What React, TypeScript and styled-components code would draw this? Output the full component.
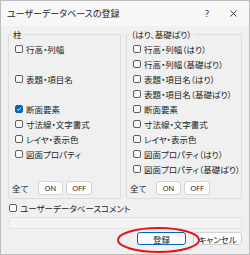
import React from 'react';
import styled, { createGlobalStyle } from 'styled-components';

const GlobalStyle = createGlobalStyle`
  body {
    margin: 0;
    font-family: "Noto Sans CJK JP", "Noto Sans", sans-serif;
    font-feature-settings: "palt";
    color: #1b1b1b;
  }
`;

const Window = styled.div`
  width: 250px;
  height: 255px;
  box-sizing: border-box;
  border: 1px solid #bdbdbd;
  background: #f0f0f0;
  display: flex;
  flex-direction: column;
`;

const TitleBar = styled.div`
  height: 25px;
  flex: none;
  display: flex;
  align-items: center;
  padding: 0 3px 0 6px;
  background: #f7f7f7;
  font-size: 9px;
`;

const Title = styled.div`
  flex: 1;
`;

const TitleButton = styled.div`
  width: 26px;
  height: 100%;
  display: flex;
  align-items: center;
  justify-content: center;
  font-family: "Noto Sans", sans-serif;
  font-size: 9px;
`;

const Body = styled.div`
  padding: 2px 7px 0 7px;
  display: flex;
  flex-direction: column;
`;

const Groups = styled.div`
  display: grid;
  grid-template-columns: 113px 1fr;
  gap: 5px;
`;

const Group = styled.fieldset`
  margin: 0;
  padding: 0 2px 3px 2px;
  border: 1px solid #dcdcdc;
  border-radius: 2px;
  min-width: 0;
`;

const Legend = styled.legend`
  padding: 0 2px;
  font-size: 8.5px;
  line-height: 12px;
`;

const List = styled.div`
  padding: 1px 0 0 4px;
  display: flex;
  flex-direction: column;
`;

const Row = styled.div`
  height: 15px;
  display: flex;
  align-items: center;
  gap: 3px;
  font-size: 8.5px;
  white-space: nowrap;
`;

const Box = styled.span<{ checked?: boolean }>`
  width: 8px;
  height: 8px;
  box-sizing: border-box;
  flex: none;
  border: 1px solid ${({ checked }) => (checked ? '#0067c0' : '#5c5c5c')};
  border-radius: 2px;
  background: ${({ checked }) => (checked ? '#0067c0' : '#fbfbfb')};
  display: flex;
  align-items: center;
  justify-content: center;
`;

const AllRow = styled.div`
  margin-top: 5px;
  padding-left: 1px;
  height: 14px;
  display: flex;
  align-items: center;
  gap: 3px;
`;

const AllLabel = styled.span`
  width: 23px;
  font-size: 8.5px;
`;

const SmallButton = styled.div<{ wide?: boolean }>`
  width: ${({ wide }) => (wide ? 26 : 25)}px;
  height: 14px;
  box-sizing: border-box;
  border: 1px solid #d3d3d3;
  border-radius: 3px;
  background: #fdfdfd;
  display: flex;
  align-items: center;
  justify-content: center;
  font-family: "Noto Sans", sans-serif;
  font-size: 7.5px;
`;

const CommentRow = styled(Row)`
  height: 12px;
  margin-top: 3px;
  padding-left: 1px;
`;

const TextField = styled.div`
  margin: 3px 0 0 1px;
  height: 12px;
  box-sizing: border-box;
  border: 1px solid #e2e2e2;
  border-radius: 2px;
  background: #f4f4f4;
`;

const Buttons = styled.div`
  margin-top: 3px;
  display: flex;
  justify-content: flex-end;
  gap: 7px;
`;

const ButtonWrap = styled.div`
  position: relative;
`;

const DialogButton = styled.div<{ primary?: boolean }>`
  width: 49px;
  height: 13px;
  box-sizing: border-box;
  border: 1px solid ${({ primary }) => (primary ? '#0067c0' : '#d3d3d3')};
  border-radius: 3px;
  background: #fdfdfd;
  display: flex;
  align-items: center;
  justify-content: center;
  font-size: 8.5px;
`;

const Annotation = styled.svg`
  position: absolute;
  left: -20px;
  top: -5px;
  pointer-events: none;
`;

const Check = ({ label, checked }: { label?: string; checked?: boolean }) => {
  if (!label) return <Row />;
  return (
    <Row>
      <Box checked={checked}>
        {checked && (
          <svg width="6" height="6" viewBox="0 0 6 6">
            <path d="M1 3.2 L2.4 4.5 L5 1.5" stroke="#fff" strokeWidth="0.9" fill="none" />
          </svg>
        )}
      </Box>
      {label}
    </Row>
  );
};

const columnItems: (string | null)[] = [
  '行高・列幅',
  null,
  '表題・項目名',
  null,
  '断面要素',
  '寸法線・文字書式',
  'レイヤ・表示色',
  '図面プロパティ',
  null
];

const beamItems: (string | null)[] = [
  '行高・列幅（はり）',
  '行高・列幅（基礎ばり）',
  '表題・項目名（はり）',
  '表題・項目名（基礎ばり）',
  '断面要素',
  '寸法線・文字書式',
  'レイヤ・表示色',
  '図面プロパティ（はり）',
  '図面プロパティ（基礎ばり）'
];

const OptionGroup = ({ title, items, checked }: { title: string; items: (string | null)[]; checked?: string }) => (
  <Group>
    <Legend>{title}</Legend>
    <List>
      {items.map((item, i) => (
        <Check key={i} label={item ?? undefined} checked={!!checked && item === checked} />
      ))}
    </List>
    <AllRow>
      <AllLabel>全て</AllLabel>
      <SmallButton>ON</SmallButton>
      <SmallButton wide>OFF</SmallButton>
    </AllRow>
  </Group>
);

export default function App() {
  return (
    <>
      <GlobalStyle />
      <Window>
        <TitleBar>
          <Title>ユーザーデータベースの登録</Title>
          <TitleButton>?</TitleButton>
          <TitleButton>
            <svg width="7" height="7" viewBox="0 0 7 7">
              <path d="M0.5 0.5 L6.5 6.5 M6.5 0.5 L0.5 6.5" stroke="#1b1b1b" strokeWidth="0.8" />
            </svg>
          </TitleButton>
        </TitleBar>
        <Body>
          <Groups>
            <OptionGroup title="柱" items={columnItems} checked="断面要素" />
            <OptionGroup title="（はり、基礎ばり）" items={beamItems} />
          </Groups>
          <CommentRow>
            <Box />
            ユーザーデータベースコメント
          </CommentRow>
          <TextField />
          <Buttons>
            <ButtonWrap>
              <DialogButton primary>登録</DialogButton>
              <Annotation width="83" height="26" viewBox="0 0 83 26">
                <ellipse cx="41.5" cy="13" rx="40.5" ry="12" stroke="#e3141c" strokeWidth="2" fill="none" />
              </Annotation>
            </ButtonWrap>
            <DialogButton>キャンセル</DialogButton>
          </Buttons>
        </Body>
      </Window>
    </>
  );
}
